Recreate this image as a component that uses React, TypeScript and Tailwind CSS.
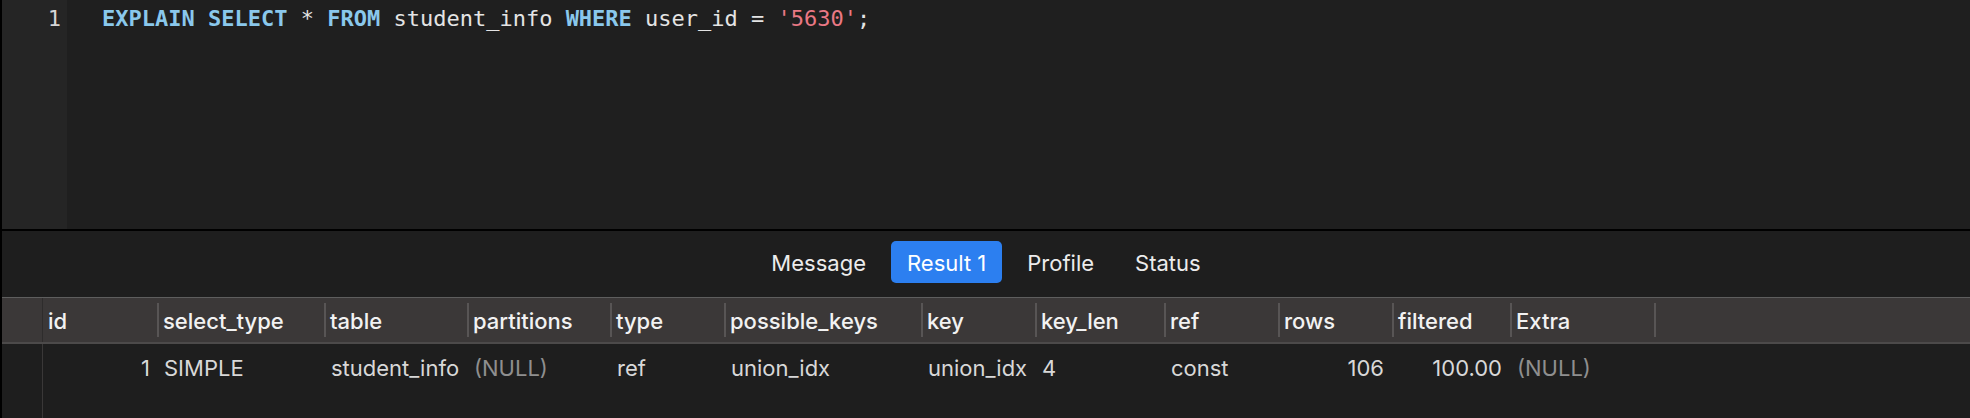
import React from 'react'

const mono = { fontFamily: '"DejaVu Sans Mono", "Liberation Mono", monospace' }
const sans = { fontFamily: 'Inter, "Liberation Sans", sans-serif' }

type Col = { name: string; w: string; value: string; num?: boolean; nil?: boolean }

const columns: Col[] = [
  { name: 'select_type', w: 'w-[167px]', value: 'SIMPLE' },
  { name: 'table', w: 'w-[143px]', value: 'student_info' },
  { name: 'partitions', w: 'w-[143px]', value: '(NULL)', nil: true },
  { name: 'type', w: 'w-[114px]', value: 'ref' },
  { name: 'possible_keys', w: 'w-[197px]', value: 'union_idx' },
  { name: 'key', w: 'w-[114px]', value: 'union_idx' },
  { name: 'key_len', w: 'w-[129px]', value: '4' },
  { name: 'ref', w: 'w-[114px]', value: 'const' },
  { name: 'rows', w: 'w-[114px]', value: '106', num: true },
  { name: 'filtered', w: 'w-[118px]', value: '100.00', num: true },
  { name: 'Extra', w: 'w-[144px]', value: '(NULL)', nil: true },
]

const tabs = ['Message', 'Result 1', 'Profile', 'Status']

const Keyword = ({ children }: { children: React.ReactNode }) => (
  <span className="font-bold text-[#8ac8ec]">{children}</span>
)

export default function App() {
  return (
    <div className="flex h-[418px] w-full flex-col overflow-hidden border-l-2 border-black bg-[#1e1e1e]">
      {/* editor */}
      <div className="flex h-[229px] bg-[#1f1f1f]" style={mono}>
        <div className="w-[65px] bg-[#252525] pt-[2px] pr-[6px] text-right text-[22px] leading-[33px] text-[#d6d6d6]">
          1
        </div>
        <div className="pl-[35px] pt-[2px] text-[22px] leading-[33px] whitespace-pre text-[#e4e4e4]">
          <Keyword>EXPLAIN</Keyword> <Keyword>SELECT</Keyword> * <Keyword>FROM</Keyword> student_info{' '}
          <Keyword>WHERE</Keyword> user_id = <span className="text-[#ea7884]">'5630'</span>;
        </div>
      </div>
      <div className="h-[2px] bg-black" />

      {/* tabs */}
      <div className="flex h-[66px] items-start justify-center gap-[9px] pt-[10px]" style={sans}>
        {tabs.map((t) => (
          <div
            key={t}
            className={`flex h-[42px] items-center rounded-[5px] px-4 pt-[2px] text-[22px] ${
              t === 'Result 1' ? 'bg-[#2c7ff0] text-white' : 'text-[#ececec]'
            }`}
          >
            {t}
          </div>
        ))}
      </div>

      {/* result grid */}
      <div className="flex flex-1 flex-col border-t border-[#5e5e5e]" style={sans}>
        <div className="flex h-[46px] items-center border-b-2 border-[#4c4a4a] bg-[#3b3838] text-[22px] font-medium text-[#f2f2f2]">
          <div className="h-full w-[41px] border-r border-[#2e2c2c]" />
          <div className="w-[114px] pl-[5px] pt-[3px]">id</div>
          {columns.map((c) => (
            <div key={c.name} className={`flex items-center ${c.w}`}>
              <div className="h-[34px] w-[2px] bg-[#585555]" />
              <span className="pl-[4px] pt-[3px]">{c.name}</span>
            </div>
          ))}
          <div className="h-[34px] w-[2px] bg-[#585555]" />
        </div>
        <div className="flex flex-1">
          <div className="w-[41px] border-r border-[#3a3838]" />
          <div className="flex flex-1 flex-col">
            <div className="flex h-[44px] items-center pt-[4px] text-[22px] text-[#d8d8d8]">
              <div className="w-[114px] pr-[7px] text-right">1</div>
              {columns.map((c) => (
                <div
                  key={c.name}
                  className={`${c.w} ${c.num ? 'pr-[8px] text-right' : 'pl-[7px]'} ${
                    c.nil ? 'text-[#8f8f8f]' : ''
                  }`}
                >
                  {c.value}
                </div>
              ))}
            </div>
          </div>
        </div>
      </div>
    </div>
  )
}
